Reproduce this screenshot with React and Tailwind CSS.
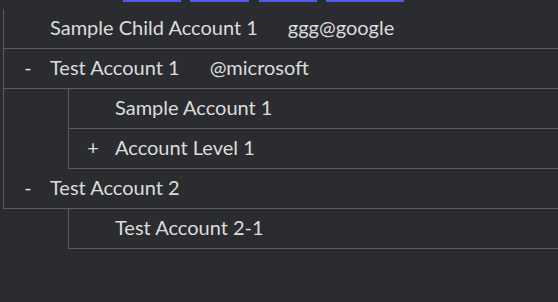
import React from "react";

function Row({ sign = "", text, extra }) {
  return (
    <div className="flex h-10 items-center border-b border-[#5c5d62] pb-[3px]">
      <span className="w-[46px] shrink-0 pl-[12px] pr-[10px] text-center">{sign}</span>
      <span>{text}</span>
      {extra && <span className="ml-[30px]">{extra}</span>}
    </div>
  );
}

export default function App() {
  return (
    <div
      className="h-[302px] w-[558px] overflow-hidden bg-[#2b2c30] text-[20px] leading-none text-[#dcdcdc]"
      style={{ fontFamily: "Lato, 'Noto Sans', sans-serif" }}
    >
      <div className="flex h-[9px] items-start">
        <div className="ml-[123px] h-[2px] w-[58px] bg-[#4f5bf0]" />
        <div className="ml-[9px] h-[2px] w-[59px] bg-[#4f5bf0]" />
        <div className="ml-[10px] h-[2px] w-[58px] bg-[#4f5bf0]" />
        <div className="ml-[9px] h-[2px] w-[78px] bg-[#4f5bf0]" />
      </div>
      <div className="ml-[3px] border-l border-[#5c5d62]">
        <Row text="Sample Child Account 1" extra="ggg@google" />
        <Row sign="-" text="Test Account 1" extra="@microsoft" />
        <div className="ml-[64px] border-l border-[#5c5d62]">
          <Row text="Sample Account 1" />
          <Row sign="+" text="Account Level 1" />
        </div>
        <Row sign="-" text="Test Account 2" />
      </div>
      <div className="ml-[68px] border-l border-[#5c5d62]">
        <Row text="Test Account 2-1" />
      </div>
    </div>
  );
}
